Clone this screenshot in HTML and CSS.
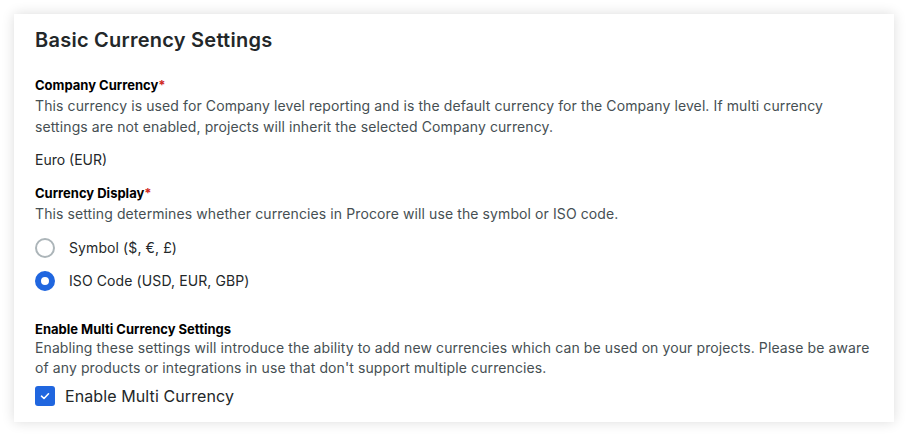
FILE: index.html
```html
<!DOCTYPE html>
<html>
<head>
<meta charset="utf-8">
<link rel="stylesheet" href="styles.css">
</head>
<body>
<div class="card">
  <h1 class="title">Basic Currency Settings</h1>

  <section class="field first">
    <div class="label">Company Currency<span class="req">*</span></div>
    <p class="desc">This currency is used for Company level reporting and is the default currency for the Company level. If multi currency settings are not enabled, projects will inherit the selected Company currency.</p>
    <div class="value">Euro (EUR)</div>
  </section>

  <section class="field">
    <div class="label">Currency Display<span class="req">*</span></div>
    <p class="desc">This setting determines whether currencies in Procore will use the symbol or ISO code.</p>
    <div class="radios">
      <label class="radio"><span class="dot"></span><span>Symbol ($, €, £)</span></label>
      <label class="radio"><span class="dot on"></span><span>ISO Code (USD, EUR, GBP)</span></label>
    </div>
  </section>

  <section class="field multi">
    <div class="label">Enable Multi Currency Settings</div>
    <p class="desc tight">Enabling these settings will introduce the ability to add new currencies which can be used on your projects. Please be aware of any products or integrations in use that don't support multiple currencies.</p>
    <label class="check">
      <span class="box"><svg width="12" height="12" viewBox="0 0 12 12"><path d="M2.5 6.2 L5 8.5 L9.5 3.8" fill="none" stroke="#fff" stroke-width="1.6" stroke-linecap="round" stroke-linejoin="round"/></svg></span>
      <span>Enable Multi Currency</span>
    </label>
  </section>
</div>
</body>
</html>
```

FILE: styles.css
```css
html, body {
  margin: 0;
  padding: 0;
  background: #fff;
}
body {
  padding: 14px;
  font-family: Inter, "Noto Sans", sans-serif;
  color: #232729;
}
.card {
  width: 880px;
  box-sizing: border-box;
  background: #fff;
  box-shadow: 0 0 12px rgba(0, 0, 0, 0.14);
  padding: 12px 21px 15px 21px;
}
.title {
  margin: 0;
  font-size: 20px;
  line-height: 28px;
  font-weight: 600;
  color: #232729;
  letter-spacing: 0.25px;
}
.field.first {
  margin-top: 23px;
}
.field {
  margin-top: 15px;
}
.field.multi {
  margin-top: 30px;
}
.label {
  font-size: 13px;
  line-height: 16px;
  font-weight: 700;
  color: #000;
}
.req {
  color: #d0281e;
}
.desc {
  margin: 2px 0 0 0;
  font-size: 14px;
  line-height: 21px;
  color: #464f53;
  letter-spacing: 0.1px;
}
.desc.tight {
  margin-top: 1px;
  line-height: 20px;
}
.value {
  margin-top: 13px;
  font-size: 14px;
  line-height: 20px;
  color: #232729;
}
.radios {
  margin-top: 14px;
  display: flex;
  flex-direction: column;
  gap: 13px;
}
.radio {
  display: flex;
  align-items: center;
  gap: 14px;
  font-size: 14px;
  line-height: 20px;
  color: #232729;
  letter-spacing: 0.1px;
}
.dot {
  width: 20px;
  height: 20px;
  box-sizing: border-box;
  border-radius: 50%;
  border: 2px solid #acb5b9;
  background: #fff;
  flex: none;
}
.dot.on {
  border: 6px solid #2066df;
}
.check {
  margin-top: 7px;
  display: flex;
  align-items: center;
  gap: 10px;
  font-size: 16px;
  line-height: 22px;
  color: #232729;
  letter-spacing: 0.1px;
}
.box {
  width: 20px;
  height: 20px;
  border-radius: 3px;
  background: #2066df;
  display: flex;
  align-items: center;
  justify-content: center;
  flex: none;
}
```
